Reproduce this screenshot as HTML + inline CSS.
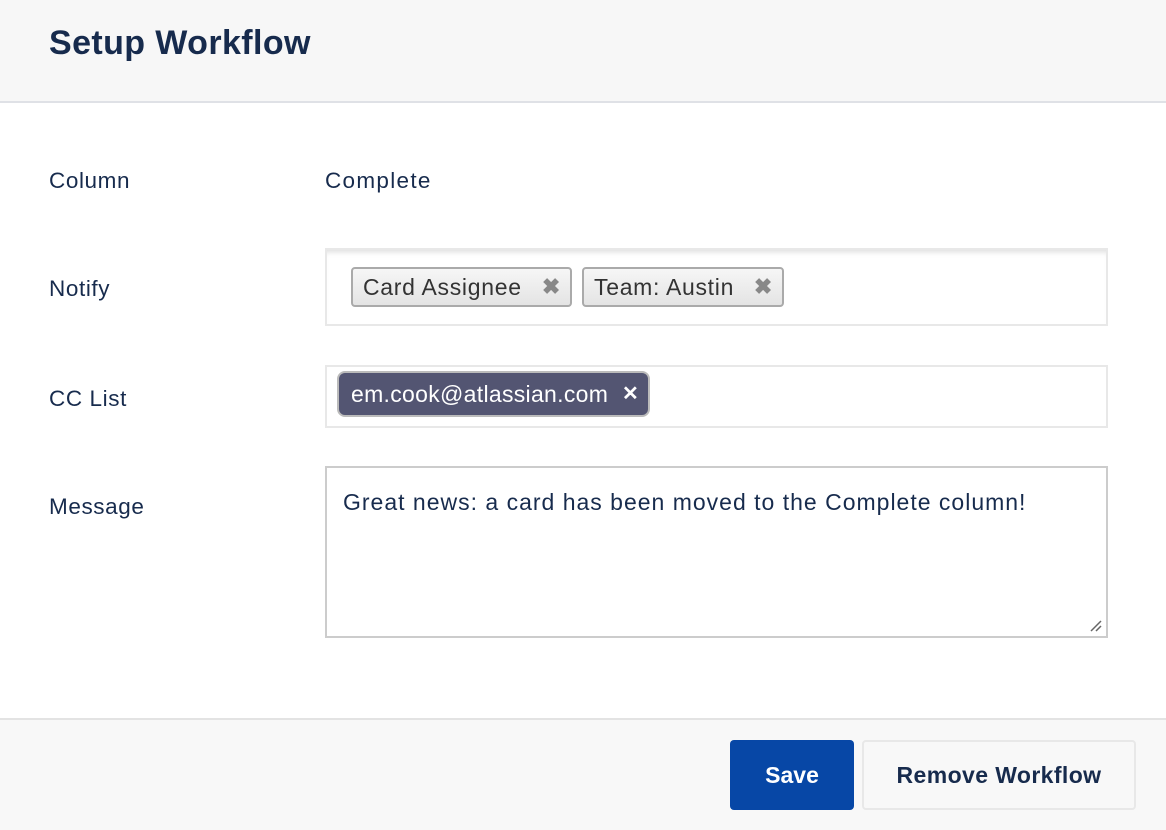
<!DOCTYPE html>
<html><head><style>
*{box-sizing:border-box;margin:0;padding:0}
body{width:1166px;height:830px;background:#fff;font-family:"Liberation Sans",sans-serif;color:#172b4d;position:relative;overflow:hidden}
.hdr{position:absolute;left:0;top:0;width:1166px;height:103px;background:#f7f7f7;border-bottom:2px solid #dfe1e6}
.hdr h1{position:absolute;left:49px;top:24px;font-size:34px;font-weight:600;color:#172b4d;letter-spacing:0.4px}
.lbl{position:absolute;left:49px;font-size:22.5px;letter-spacing:0.6px;color:#172b4d}
.box{position:absolute;left:325px;width:783px;border:2px solid #e8e8e8;background:#fff}
.tag{position:absolute;height:40px;border:2px solid #aaa;border-radius:4px;background:linear-gradient(#f6f6f6,#e4e4e4);font-size:23px;letter-spacing:0.7px;color:#333;line-height:36px;padding-left:10px}
.tag b{position:absolute;right:9px;top:0;color:#888;font-size:22px}
.ftr{position:absolute;left:0;top:718px;width:1166px;height:112px;background:#f8f8f8;border-top:2px solid #e3e3e3}
.btn{position:absolute;top:740px;height:70px;border-radius:4px;font-size:23px;font-weight:bold;text-align:center;line-height:70px}
</style></head><body>
<div class="hdr"><h1>Setup Workflow</h1></div>
<div class="lbl" style="top:168px">Column</div>
<div class="lbl" style="top:168px;left:325px;letter-spacing:1.3px">Complete</div>
<div class="lbl" style="top:276px">Notify</div>
<div class="lbl" style="top:386px">CC List</div>
<div class="lbl" style="top:494px">Message</div>
<div class="box" style="top:248px;height:78px;box-shadow:inset 0 6px 6px -4px #ddd"></div>
<div class="tag" style="left:351px;top:267px;width:221px">Card Assignee<b>✖</b></div>
<div class="tag" style="left:582px;top:267px;width:202px">Team: Austin<b>✖</b></div>
<div class="box" style="top:365px;height:63px"></div>
<div class="tag" style="left:337px;top:371px;width:313px;height:46px;line-height:42px;background:#535572;color:#fff;border-color:#bbb;border-radius:8px;font-size:23px;letter-spacing:0.3px;padding-left:12px">em.cook@atlassian.com<b style="color:#fff;font-size:20px">✕</b></div>
<div class="box" style="top:466px;height:172px;border-color:#ccc;padding:21px 16px;font-size:23px;letter-spacing:1px;color:#172b4d">Great news: a card has been moved to the Complete column!
<svg style="position:absolute;right:3px;bottom:3px" width="14" height="14"><path d="M2 12L12 2M7 12L12 7" stroke="#666" stroke-width="1.5"/></svg></div>
<div class="ftr"></div>
<div class="btn" style="left:730px;width:124px;background:#0747a6;color:#fff">Save</div>
<div class="btn" style="left:862px;width:274px;background:#f8f8f8;border:2px solid #e8e8e8;color:#172b4d;font-weight:600;line-height:66px;letter-spacing:0.4px">Remove Workflow</div>
</body></html>
